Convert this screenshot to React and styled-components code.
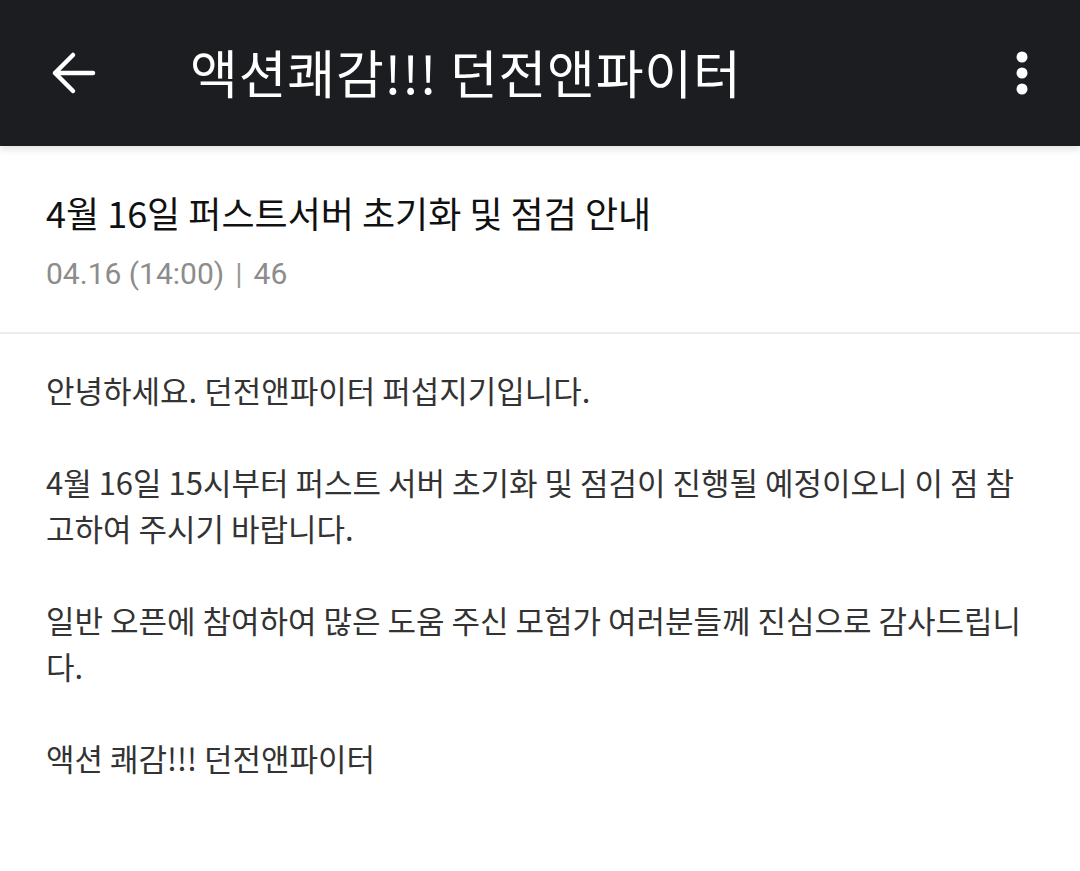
import React from 'react';
import styled, { createGlobalStyle } from 'styled-components';

const GlobalStyle = createGlobalStyle`
    html, body {
        margin: 0;
        padding: 0;
        background: #ffffff;
    }
    body {
        font-family: 'Noto Sans CJK KR', 'Noto Sans', sans-serif;
    }
`

const paragraphs = [
    '안녕하세요. 던전앤파이터 퍼섭지기입니다.',
    '4월 16일 15시부터 퍼스트 서버 초기화 및 점검이 진행될 예정이오니 이 점 참고하여 주시기 바랍니다.',
    '일반 오픈에 참여하여 많은 도움 주신 모험가 여러분들께 진심으로 감사드립니다.',
    '액션 쾌감!!! 던전앤파이터',
];

function BackIcon() {
    return (
        <svg width="48" height="48" viewBox="0 0 48 48" fill="none">
            <path d="M44 24H6M24 6L6 24L24 42" stroke="#fff" strokeWidth="4.5" strokeLinecap="round" strokeLinejoin="round" />
        </svg>
    );
}

function MoreIcon() {
    return (
        <svg width="24" height="48" viewBox="0 0 24 48">
            <circle cx="12" cy="8" r="5.5" fill="#fff" />
            <circle cx="12" cy="24" r="5.5" fill="#fff" />
            <circle cx="12" cy="40" r="5.5" fill="#fff" />
        </svg>
    );
}

export default function App() {
    return (
        <Page>
            <GlobalStyle />
            <TopBar>
                <IconButton className='back'><BackIcon /></IconButton>
                <BarTitle>액션쾌감!!! 던전앤파이터</BarTitle>
                <IconButton className='more'><MoreIcon /></IconButton>
            </TopBar>
            <PostHead>
                <PostTitle>4월 16일 퍼스트서버 초기화 및 점검 안내</PostTitle>
                <PostMeta>
                    04.16 (14:00)<Sep>|</Sep>46
                </PostMeta>
            </PostHead>
            <PostBody>
                {paragraphs.map((p, i) => (
                    <Paragraph key={i}>{p}</Paragraph>
                ))}
            </PostBody>
        </Page>
    );
}

const Page = styled.div`
    width: 1080px;
    min-height: 871px;
    background: #fff;
`

const TopBar = styled.header`
    position: relative;
    height: 146px;
    background: #1b1d21;
    display: flex;
    align-items: center;
    box-shadow: 0 3px 8px rgba(0, 0, 0, 0.12);
    .back {
        margin-left: 49px;
    }
    .more {
        margin-left: auto;
        margin-right: 46px;
    }
`

const IconButton = styled.div`
    display: flex;
    align-items: center;
    justify-content: center;
    cursor: pointer;
`

const BarTitle = styled.h1`
    margin: 0 0 0 93px;
    color: #fff;
    font-size: 52px;
    font-weight: 400;
    line-height: 1;
    letter-spacing: 0.8px;
    padding-bottom: 2px;
`

const PostHead = styled.section`
    padding: 43px 46px 38px;
    border-bottom: 2px solid #ececec;
`

const PostTitle = styled.h2`
    margin: 0;
    font-size: 36px;
    font-weight: 400;
    line-height: 46px;
    color: #111;
`

const PostMeta = styled.div`
    margin-top: 19px;
    font-family: Roboto, 'Noto Sans CJK KR', sans-serif;
    font-size: 30px;
    line-height: 40px;
    color: #8c8c8c;
`

const Sep = styled.span`
    margin: 0 11px;
    color: #9a9a9a;
`

const PostBody = styled.article`
    padding: 33px 46px 40px;
    display: flex;
    flex-direction: column;
    gap: 46px;
`

const Paragraph = styled.p`
    margin: 0;
    font-size: 31px;
    line-height: 46px;
    color: #333;
    word-break: break-all;
`
